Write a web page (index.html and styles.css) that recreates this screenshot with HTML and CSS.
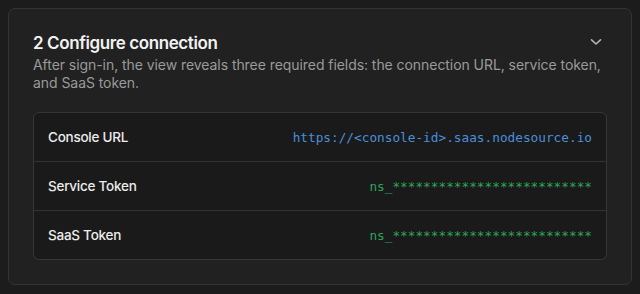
FILE: index.html
```html
<!DOCTYPE html>
<html lang="en">
<head>
<meta charset="utf-8">
<title>Configure connection</title>
<link rel="stylesheet" href="styles.css">
</head>
<body>
<section class="card">
  <header class="card-head">
    <div class="title-row">
      <h2 class="title">2 Configure connection</h2>
      <svg class="chevron" width="12" height="8" viewBox="0 0 12 8" aria-hidden="true"><path d="M1.5 1.8 L6 6 L10.5 1.8" fill="none" stroke="#b5b5b5" stroke-width="1.6" stroke-linecap="round" stroke-linejoin="round"/></svg>
    </div>
    <p class="desc">After sign-in, the view reveals three required fields: the connection URL, service token, and SaaS token.</p>
  </header>
  <div class="fields">
    <div class="row">
      <span class="label">Console URL</span>
      <code class="value url">https://&lt;console-id&gt;.saas.nodesource.io</code>
    </div>
    <div class="row">
      <span class="label">Service Token</span>
      <code class="value token">ns_**************************</code>
    </div>
    <div class="row">
      <span class="label">SaaS Token</span>
      <code class="value token">ns_**************************</code>
    </div>
  </div>
</section>
</body>
</html>
```
FILE: styles.css
```css
html, body {
  background: #1c1c1c;
}
body {
  margin: 8px;
  font-family: Inter, "Noto Sans", sans-serif;
  color: #ececec;
}
.card {
  background: #212121;
  border: 1px solid #343434;
  border-radius: 7px;
  padding: 22px 24px 24px;
}
.title-row {
  display: flex;
  justify-content: space-between;
  align-items: center;
}
.title {
  margin: 0;
  font-size: 17px;
  letter-spacing: -0.4px;
  line-height: 24px;
  font-weight: 600;
  color: #f2f2f2;
}
.desc {
  margin: 1px 0 0;
  font-size: 14px;
  letter-spacing: -0.06px;
  line-height: 18px;
  color: #9a9a9a;
}
.chevron {
  margin-right: 5px;
  margin-top: -2px;
  flex: none;
}
.fields {
  margin-top: 20px;
  background: #1a1a1a;
  border: 1px solid #363636;
  border-radius: 6px;
}
.row {
  height: 48px;
  display: flex;
  align-items: center;
  justify-content: space-between;
  padding: 0 14px;
}
.row + .row {
  border-top: 1px solid #333333;
}
.label {
  font-size: 13.5px;
  letter-spacing: -0.25px;
  font-weight: 500;
  color: #ececec;
}
.value {
  font-family: "DejaVu Sans Mono", "Liberation Mono", monospace;
  font-size: 12.75px;
}
.url {
  color: #4a8fdc;
}
.token {
  color: #2fa35a;
}
```
